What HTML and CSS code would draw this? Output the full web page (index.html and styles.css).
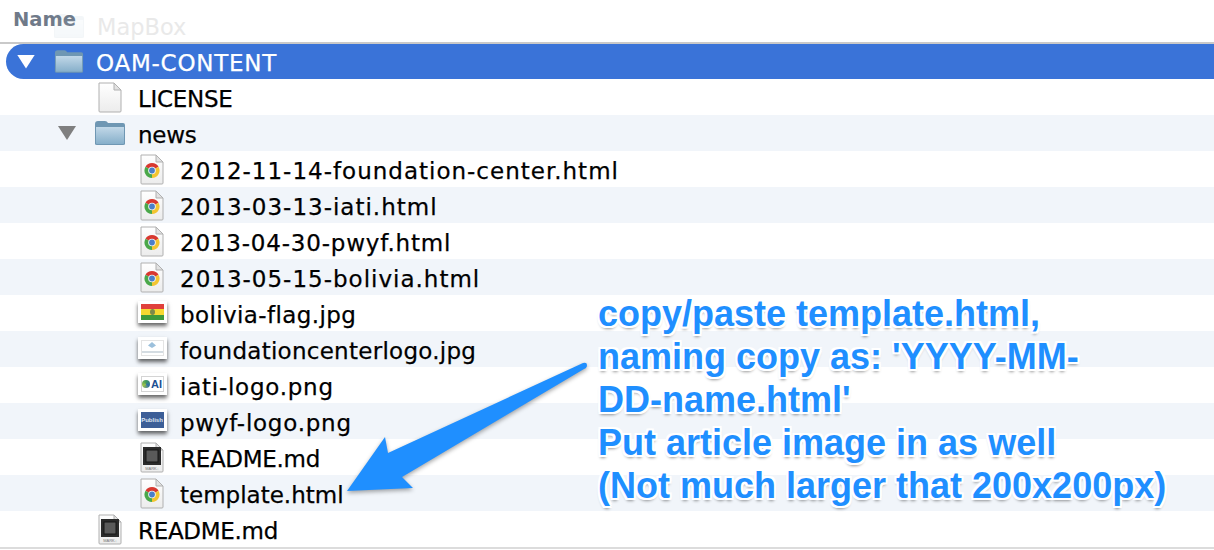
FILE: index.html
```html
<!DOCTYPE html>
<html lang="en">
  <head>
    <meta charset="utf-8" />
    <title>OAM-CONTENT</title>
    <link rel="stylesheet" href="styles.css">
  </head>

  <body>
    <svg class="defs" width="0" height="0">
      <defs>
        <linearGradient id="folderFill" x1="0" y1="0" x2="0" y2="1">
          <stop offset="0" stop-color="#c2d8e8" />
          <stop offset="1" stop-color="#86afca" />
        </linearGradient>
        <linearGradient id="paperFill" x1="0" y1="0" x2="0" y2="1">
          <stop offset="0" stop-color="#ffffff" />
          <stop offset="1" stop-color="#ececec" />
        </linearGradient>
        <symbol id="folder" viewBox="0 0 32 26">
          <path d="M1 4 Q1 1 4 1 H11 Q13 1 14 3 H29 Q31 3 31 5 V24 Q31 25 29 25 H3 Q1 25 1 24 Z" fill="#6f97b3" />
          <path d="M2 7 H30 V23 Q30 24 29 24 H3 Q2 24 2 23 Z" fill="url(#folderFill)" />
        </symbol>
        <symbol id="doc" viewBox="0 0 24 31">
          <path d="M1 1 H16 L23 8 V29 Q23 30 22 30 H2 Q1 30 1 29 Z" fill="url(#paperFill)" stroke="#b0b0b0" />
          <path d="M16 1 V8 H23 Z" fill="#e2e2e2" stroke="#b0b0b0" />
        </symbol>
        <symbol id="chrome" viewBox="0 0 24 31">
          <use href="#doc" width="24" height="31" />
          <path d="M5.5 12.75 A7.5 7.5 0 0 1 18.5 12.75 L12 16.5 Z" fill="#d8382f" />
          <path d="M18.5 12.75 A7.5 7.5 0 0 1 12 24 L12 16.5 Z" fill="#f2c531" />
          <path d="M12 24 A7.5 7.5 0 0 1 5.5 12.75 L12 16.5 Z" fill="#4aa84a" />
          <circle cx="12" cy="16.5" r="3.8" fill="#f4f4f4" />
          <circle cx="12" cy="16.5" r="2.9" fill="#4a7fc9" />
        </symbol>
        <symbol id="mark" viewBox="0 0 24 31">
          <use href="#doc" width="24" height="31" />
          <rect x="3" y="5" width="18" height="18" fill="#2b2b2b" />
          <rect x="6" y="8" width="12" height="12" fill="#5a5a5a" stroke="#161616" />
          <text x="12" y="27.8" text-anchor="middle" class="markText">MARK↓</text>
        </symbol>
      </defs>
    </svg>

    <main class="browser">
      <header class="columns">
        <span class="columnName">Name</span>
        <span class="ghost">
          <svg class="icon folderIcon"><use href="#folder" /></svg>
          MapBox
        </span>
      </header>

      <ul class="tree">
        <li class="row selected">
          <span class="twisty"></span>
          <span class="slot"><svg class="icon folderIcon small"><use href="#folder" /></svg></span>
          <span class="name wide">OAM-CONTENT</span>
        </li>
        <li class="row depth1">
          <span class="twisty none"></span>
          <span class="slot"><svg class="icon docIcon"><use href="#doc" /></svg></span>
          <span class="name tight">LICENSE</span>
        </li>
        <li class="row depth1">
          <span class="twisty"></span>
          <span class="slot"><svg class="icon folderIcon"><use href="#folder" /></svg></span>
          <span class="name tight">news</span>
        </li>
        <li class="row depth2">
          <span class="twisty none"></span>
          <span class="slot"><svg class="icon docIcon"><use href="#chrome" /></svg></span>
          <span class="name dated">2012-11-14-foundation-center.html</span>
        </li>
        <li class="row depth2">
          <span class="twisty none"></span>
          <span class="slot"><svg class="icon docIcon"><use href="#chrome" /></svg></span>
          <span class="name dated">2013-03-13-iati.html</span>
        </li>
        <li class="row depth2">
          <span class="twisty none"></span>
          <span class="slot"><svg class="icon docIcon"><use href="#chrome" /></svg></span>
          <span class="name dated shorter">2013-04-30-pwyf.html</span>
        </li>
        <li class="row depth2">
          <span class="twisty none"></span>
          <span class="slot"><svg class="icon docIcon"><use href="#chrome" /></svg></span>
          <span class="name dated">2013-05-15-bolivia.html</span>
        </li>
        <li class="row depth2">
          <span class="twisty none"></span>
          <span class="slot">
            <span class="thumb flag"><span class="red"></span><span class="yellow"></span><span class="green"></span><i class="emblem"></i></span>
          </span>
          <span class="name loose">bolivia-flag.jpg</span>
        </li>
        <li class="row depth2">
          <span class="twisty none"></span>
          <span class="slot">
            <span class="thumb foundation"><span class="mini"><i></i></span></span>
          </span>
          <span class="name slight">foundationcenterlogo.jpg</span>
        </li>
        <li class="row depth2">
          <span class="twisty none"></span>
          <span class="slot">
            <span class="thumb iati"><span class="inner"><span class="globe"></span><b>AI</b></span></span>
          </span>
          <span class="name wide">iati-logo.png</span>
        </li>
        <li class="row depth2">
          <span class="twisty none"></span>
          <span class="slot">
            <span class="thumb pwyf"><b>Publish</b></span>
          </span>
          <span class="name wide">pwyf-logo.png</span>
        </li>
        <li class="row depth2">
          <span class="twisty none"></span>
          <span class="slot"><svg class="icon docIcon"><use href="#mark" /></svg></span>
          <span class="name tight">README.md</span>
        </li>
        <li class="row depth2">
          <span class="twisty none"></span>
          <span class="slot"><svg class="icon docIcon"><use href="#chrome" /></svg></span>
          <span class="name">template.html</span>
        </li>
        <li class="row depth1">
          <span class="twisty none"></span>
          <span class="slot"><svg class="icon docIcon"><use href="#mark" /></svg></span>
          <span class="name tight">README.md</span>
        </li>
      </ul>
    </main>

    <svg class="arrow" width="1214" height="550" viewBox="0 0 1214 550">
      <path d="M347 491 L385 437 L388 453 L583 363 Q587 362 587 365 Q587 368 584 369 L402 477 L413 488 Z" fill="#1f8fff" />
    </svg>

    <p class="note">copy/paste template.html,<br />naming copy as: 'YYYY-MM-<br />DD-name.html'<br />Put article image in as well<br />(Not much larger that 200x200px)</p>
  </body>
</html>
```

FILE: styles.css
```css
html,
body {
  margin: 0;
  height: 100%;
  overflow: hidden;
}

body {
  position: relative;
  background: white;
  font-family: 'DejaVu Sans', sans-serif;
  color: black;
}

.defs {
  display: block;
}

.browser {
  display: flex;
  flex-direction: column;
}

.columns {
  display: flex;
  align-items: center;
  height: 42px;
  padding-left: 13px;
  border-bottom: 2px solid #c9c9c9;
}

.columnName {
  width: 84px;
  margin-bottom: 3px;
  font-size: 19.5px;
  font-weight: 700;
  color: #707a89;
}

.ghost {
  position: relative;
  margin-top: 11px;
  font-size: 22.5px;
  color: #e9e9e9;
}

.ghost .icon {
  position: absolute;
  left: -44px;
  top: -1px;
  opacity: 0.08;
}

.tree {
  list-style: none;
  margin: 0;
  padding: 0;
  border-bottom: 2px solid #dcdcdc;
}

.row {
  display: flex;
  align-items: center;
  height: 36px;
  padding-left: 5px;
  font-size: 23px;
  white-space: nowrap;
}

.row:nth-child(odd) {
  background: #f1f5fa;
}

.row.selected {
  height: 35px;
  margin-left: 6px;
  padding-left: 0;
  background: #3a73d8;
  border-radius: 18px 0 0 18px;
  color: white;
}

.depth1 {
  padding-left: 47px;
}

.depth2 {
  padding-left: 89px;
}

.name {
  padding-top: 4px;
  -webkit-text-stroke: 0.25px currentColor;
}

.selected .name {
  padding-top: 2px;
  margin-left: -1px;
}

.dated {
  letter-spacing: 1px;
}

.dated.shorter {
  letter-spacing: 0.8px;
}

.wide {
  letter-spacing: 0.75px;
}

.loose {
  letter-spacing: 0.4px;
}

.slight {
  letter-spacing: 0.27px;
}

.tight {
  letter-spacing: -0.3px;
}

.twisty {
  flex: none;
  width: 40px;
  height: 14px;
  background: #7f7f7f;
  clip-path: polygon(11px 0, 29px 0, 20px 14px);
}

.selected .twisty {
  background: white;
}

.twisty.none {
  background: none;
}

.slot {
  flex: none;
  display: flex;
  justify-content: center;
  align-items: center;
  width: 46px;
  margin-right: 5px;
}

.icon {
  display: block;
}

.folderIcon {
  width: 32px;
  height: 26px;
}

.folderIcon.small {
  width: 30px;
  height: 25px;
}

.docIcon {
  width: 24px;
  height: 31px;
}

.markText {
  font-family: 'Liberation Sans', sans-serif;
  font-size: 4px;
  fill: #777;
}

.thumb {
  position: relative;
  display: flex;
  flex-direction: column;
  justify-content: center;
  align-items: center;
  box-sizing: border-box;
  width: 29px;
  height: 22px;
  margin-bottom: 2px;
  padding: 3px;
  background: white;
  box-shadow: 0 3px 4px rgba(0, 0, 0, 0.6);
}

.flag span {
  display: block;
  width: 100%;
  flex: 1;
}

.flag .red {
  background: #e0403c;
}

.flag .yellow {
  background: #f6d931;
}

.flag .green {
  background: #3f9a3c;
}

.emblem {
  position: absolute;
  left: 12px;
  top: 8px;
  width: 5px;
  height: 6px;
  border-radius: 50%;
  background: #7d8a4a;
}

.foundation .mini {
  display: flex;
  justify-content: center;
  width: 100%;
  height: 100%;
  box-sizing: border-box;
  border: 1px solid #e4e4e4;
  background: linear-gradient(transparent 70%, #d4dce2 70%, #d4dce2 85%, transparent 85%);
}

.foundation .mini i {
  width: 8px;
  height: 6px;
  margin-top: 1px;
  background: #9cc0dc;
  clip-path: polygon(50% 0, 100% 60%, 50% 100%, 0 60%);
}

.iati .inner {
  display: flex;
  justify-content: center;
  align-items: center;
  gap: 1px;
  width: 100%;
  height: 100%;
  box-sizing: border-box;
  border: 1px solid #d4d4d4;
}

.iati .globe {
  width: 8px;
  height: 8px;
  border-radius: 50%;
  background: conic-gradient(#3f9a5c, #2f6fa8, #9cc24a, #3f9a5c);
}

.iati b {
  font-family: 'Liberation Sans', sans-serif;
  font-size: 11px;
  line-height: 1;
  color: #1c4f92;
}

.pwyf b {
  display: block;
  width: 100%;
  background: #3c5e97;
  color: #dfe6f2;
  font-family: 'Liberation Sans', sans-serif;
  font-size: 6px;
  line-height: 16px;
  text-align: center;
}

.arrow {
  position: absolute;
  left: 0;
  top: 0;
  filter: drop-shadow(0 2px 2px rgba(0, 0, 0, 0.35));
}

.note {
  position: absolute;
  left: 598px;
  top: 292px;
  margin: 0;
  font-family: 'Liberation Sans', sans-serif;
  font-size: 36px;
  font-weight: 700;
  line-height: 43px;
  white-space: nowrap;
  color: #1f8fff;
  text-shadow: 2px 0 0 white, -2px 0 0 white, 0 2px 0 white, 0 -2px 0 white, 2px 2px 0 white, -2px 2px 0 white, 2px -2px 0 white, -2px -2px 0 white, 0 3px 3px rgba(0, 0, 0, 0.4);
}
```
